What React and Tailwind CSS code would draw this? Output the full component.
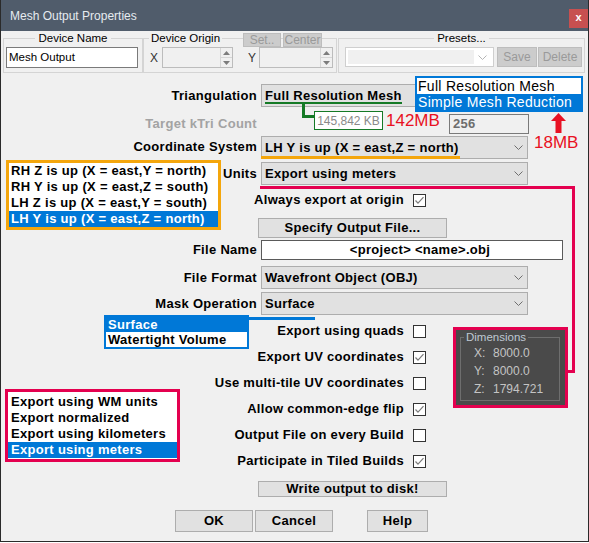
import React from "react";

const Chevron = ({ color = "#6e6e6e" }) => (
  <svg width="9" height="5" viewBox="0 0 9 5">
    <polyline points="0.5,0.5 4.5,4.5 8.5,0.5" fill="none" stroke={color} strokeWidth="1" />
  </svg>
);

function Combo({ text }) {
  return (
    <div className="flex items-center h-[23px] w-[267px] bg-[#e1e1e1] border border-[#adadad] pl-[3px] pr-[4px] text-[13px] font-bold tracking-[0.3px]">
      <span className="flex-1 whitespace-nowrap">{text}</span>
      <Chevron />
    </div>
  );
}

function Check({ checked }) {
  return (
    <div className="w-[13px] h-[13px] border border-[#333333] bg-white flex items-center justify-center">
      {checked && (
        <svg width="11" height="11" viewBox="0 0 11 11">
          <polyline points="1.5,5.5 4,8.2 9.5,2.2" fill="none" stroke="#7a7a7a" strokeWidth="1.2" />
        </svg>
      )}
    </div>
  );
}

function Row({ label, children, className = "", labelClass = "" }) {
  return (
    <div className={`flex items-center ${className}`}>
      <div className={`w-[256px] text-right text-[13px] font-bold tracking-[0.3px] whitespace-nowrap ${labelClass}`}>{label}</div>
      {children}
    </div>
  );
}

function CheckRow({ label, checked, className = "" }) {
  return (
    <div className={`flex items-center h-[14px] ${className}`}>
      <div className="w-[403px] text-right text-[13px] font-bold tracking-[0.3px] whitespace-nowrap">{label}</div>
      <div className="ml-[9px]">
        <Check checked={checked} />
      </div>
    </div>
  );
}

function Spin({ className }) {
  return (
    <div className={`flex h-[21px] border border-[#bcbcbc] bg-[#f0f0f0] justify-end ${className}`}>
      <div className="w-[12px] flex flex-col border-l border-[#d6d6d6]">
        <div className="flex-1 flex items-center justify-center border-b border-[#d6d6d6]">
          <svg width="7" height="4" viewBox="0 0 7 4"><polygon points="3.5,0 7,4 0,4" fill="#7c7c7c" /></svg>
        </div>
        <div className="flex-1 flex items-center justify-center">
          <svg width="7" height="4" viewBox="0 0 7 4"><polygon points="0,0 7,0 3.5,4" fill="#7c7c7c" /></svg>
        </div>
      </div>
    </div>
  );
}

const btn = "bg-[#e1e1e1] border border-[#adadad] flex items-center justify-center text-[13px] font-bold tracking-[0.3px] whitespace-nowrap";
const dbtn = "bg-[#cccccc] border border-[#bdbdbd] flex items-center justify-center text-[12px] text-[#9a9a9a] whitespace-nowrap";
const blue = "bg-[#0078d7] text-white";

export default function App() {
  return (
    <div className="relative w-[589px] h-[543px] bg-white font-['Liberation_Sans',Arial,sans-serif] text-black">
      <div className="w-[589px] h-[542px] border-x border-b border-[#2a2a2a] bg-[#f0f0f0] flex flex-col">
        {/* Title bar */}
        <div className="h-[31px] bg-[#505c6b] flex items-center pl-[9px]">
          <span className="text-[12px] text-[#e6ebf0] flex-1">Mesh Output Properties</span>
          <div className="self-start mt-[9px] w-[19px] h-[19px] bg-[#c75050] flex items-center justify-center text-white text-[11px] font-bold leading-none pb-[2px]">
            x
          </div>
        </div>

        {/* Top groups */}
        <div className="flex h-[42px] pt-[1px] pl-[2px]">
          <fieldset className="w-[140px] h-[41px] border border-[#d4d4d4]">
            <legend className="mx-auto px-[3px] text-[11.5px] leading-[13px]">Device Name</legend>
            <div className="mt-[2px] ml-[2px] w-[132px] h-[21px] border border-[#7a7a7a] bg-white text-[11.5px] pl-[2px] flex items-center">
              Mesh Output
            </div>
          </fieldset>
          <fieldset className="w-[194px] h-[41px] border border-[#d4d4d4]">
            <legend className="ml-[5px] px-[2px] text-[11.5px] leading-[13px]">Device Origin</legend>
            <div className="flex items-center mt-[2px]">
              <span className="ml-[6px] text-[12px] text-[#333]">X</span>
              <Spin className="ml-[4px] w-[71px]" />
              <span className="ml-[15px] text-[12px] text-[#333]">Y</span>
              <Spin className="ml-[3px] w-[74px]" />
            </div>
          </fieldset>
          <fieldset className="ml-[1px] w-[247px] h-[41px] border border-[#d4d4d4]">
            <legend className="mx-auto px-[3px] text-[11.5px] leading-[13px]">Presets...</legend>
            <div className="flex items-center mt-[2px] ml-[6px]">
              <div className="w-[149px] h-[20px] bg-white border border-[#cfcfcf] flex items-center p-[2px]">
                <div className="w-[126px] h-full bg-[#f0f0f0]" />
                <div className="flex-1 flex justify-center">
                  <Chevron color="#b5b5b5" />
                </div>
              </div>
              <div className={`${dbtn} ml-[3px] w-[40px] h-[20px]`}>Save</div>
              <div className={`${dbtn} ml-[1px] w-[44px] h-[20px]`}>Delete</div>
            </div>
          </fieldset>
        </div>

        {/* Main form */}
        <div className="flex flex-col">
          <Row label="Triangulation" className="mt-[11px]">
            <div className="ml-[4px] w-[267px] h-[23px] bg-[#e1e1e1] border border-[#adadad] flex items-center pl-[3px] text-[13px] font-bold tracking-[0.3px]">
              Full Resolution Mesh
            </div>
          </Row>
          <Row label="Target kTri Count" className="mt-[7px]" labelClass="text-[#a3a3a3]">
            <div className="ml-[192px] w-[80px] h-[20px] border border-[#7a7a7a] bg-[#f0f0f0] flex items-center pl-[3px] text-[13px] font-bold tracking-[0.3px] text-[#6d6d6d]">
              256
            </div>
          </Row>
          <Row label="Coordinate System" className="mt-[2px]">
            <div className="ml-[4px]">
              <div className="h-[22px] flex">
                <Combo text="LH Y is up (X = east,Z = north)" />
              </div>
            </div>
          </Row>
          <Row label="Units" className="mt-[4px]">
            <div className="ml-[4px]">
              <Combo text="Export using meters" />
            </div>
          </Row>
          <div className="mt-[8px]">
            <CheckRow label="Always export at origin" checked />
          </div>
          <div className={`${btn} mt-[11px] ml-[257px] w-[189px] h-[20px]`}>Specify Output File...</div>
          <Row label="File Name" className="mt-[2px]">
            <div className="ml-[4px] w-[302px] h-[20px] bg-white border border-[#5a5a5a] flex items-center justify-center pl-[16px] text-[13px] font-bold tracking-[0.3px]">
              {"<project> <name>.obj"}
            </div>
          </Row>
          <Row label="File Format" className="mt-[6px]">
            <div className="ml-[4px]">
              <Combo text="Wavefront Object (OBJ)" />
            </div>
          </Row>
          <Row label="Mask Operation" className="mt-[3px]">
            <div className="ml-[4px]">
              <Combo text="Surface" />
            </div>
          </Row>
          <CheckRow label="Export using quads" className="mt-[9px]" />
          <CheckRow label="Export UV coordinates" checked className="mt-[12px]" />
          <CheckRow label="Use multi-tile UV coordinates" className="mt-[12px]" />
          <CheckRow label="Allow common-edge flip" checked className="mt-[12px]" />
          <CheckRow label="Output File on every Build" className="mt-[12px]" />
          <CheckRow label="Participate in Tiled Builds" checked className="mt-[12px]" />
          <div className={`${btn} mt-[13px] ml-[257px] w-[189px] h-[16px]`}>Write output to disk!</div>
          <div className="flex mt-[13px] ml-[174px]">
            <div className={`${btn} w-[78px] h-[22px]`}>OK</div>
            <div className={`${btn} ml-[2px] w-[78px] h-[22px]`}>Cancel</div>
            <div className={`${btn} ml-[34px] w-[61px] h-[22px]`}>Help</div>
          </div>
        </div>
      </div>

      {/* Disabled buttons over Device Origin group border */}
      <div className={`${dbtn} absolute left-[243px] top-[33px] w-[38px] h-[14px]`}>Set..</div>
      <div className={`${dbtn} absolute left-[283px] top-[33px] w-[39px] h-[14px]`}>Center</div>

      {/* Annotations */}
      <div className="absolute left-[415px] top-[76px] w-[168px] border-2 border-[#0078d7] bg-white text-[14px] leading-[16px]">
        <div className="h-[16px] pl-[1px] tracking-[0.3px] whitespace-nowrap">Full Resolution Mesh</div>
        <div className={`h-[16px] pl-[1px] tracking-[0.3px] whitespace-nowrap ${blue}`}>Simple Mesh Reduction</div>
      </div>

      <div className="absolute left-[265px] top-[102px] w-[137px] h-[2px] bg-[#157a26]" />
      <div className="absolute left-[302px] top-[102px] w-[3px] h-[16px] bg-[#157a26]" />
      <div className="absolute left-[302px] top-[115px] w-[13px] h-[3px] bg-[#157a26]" />
      <div className="absolute left-[314px] top-[111px] w-[69px] h-[19px] border border-[#157a26] bg-white flex items-center justify-center text-[12px] text-[#8a8a8a] whitespace-nowrap">
        145,842 KB
      </div>
      <div className="absolute left-[386px] top-[112px] text-[17px] leading-none text-[#e81123]">142MB</div>

      <svg className="absolute left-[551px] top-[113px]" width="15" height="20" viewBox="0 0 15 20">
        <polygon points="7.5,0 15,8 10.5,8 10.5,20 4.5,20 4.5,8 0,8" fill="#e81123" />
      </svg>
      <div className="absolute left-[534px] top-[134px] text-[17px] leading-none text-[#e81123]">18MB</div>

      <div className="absolute left-[261px] top-[156px] w-[199px] h-[3px] bg-[#f4a60c]" />
      <div className="absolute left-[6px] top-[160px] w-[215px] border-[3px] border-[#f4a60c] bg-white text-[13px] font-bold tracking-[0.3px] leading-[16px]">
        <div className="h-[16px] pl-[2px] whitespace-nowrap">RH Z is up (X = east,Y = north)</div>
        <div className="h-[16px] pl-[2px] whitespace-nowrap">RH Y is up (X = east,Z = south)</div>
        <div className="h-[16px] pl-[2px] whitespace-nowrap">LH Z is up (X = east,Y = south)</div>
        <div className={`h-[16px] pl-[2px] whitespace-nowrap ${blue}`}>LH Y is up (X = east,Z = north)</div>
      </div>

      <div className="absolute left-[260px] top-[186px] w-[315px] h-[3px] bg-[#e4004f]" />
      <div className="absolute left-[572px] top-[186px] w-[3px] h-[187px] bg-[#e4004f]" />
      <div className="absolute left-[566px] top-[370px] w-[9px] h-[3px] bg-[#e4004f]" />

      <div className="absolute left-[248px] top-[317px] w-[67px] h-[3px] bg-[#0078d7]" />
      <div className="absolute left-[104px] top-[315px] w-[145px] border-2 border-[#0078d7] bg-white text-[13px] font-bold tracking-[0.3px] leading-[15px]">
        <div className={`h-[15px] pl-[2px] ${blue}`}>Surface</div>
        <div className="h-[15px] pl-[2px]">Watertight Volume</div>
      </div>

      <div className="absolute left-[453px] top-[327px] w-[115px] h-[81px] border-[3px] border-[#e4004f] bg-[#4a4a4a] pl-[4px] pt-[1px]">
        <fieldset className="w-[100px] h-[70px] border border-[#6e6e6e] text-[12px] text-[#c4c4c4]">
          <legend className="ml-[3px] px-[2px] text-[11.5px] leading-[13px] text-[#bfc8d2]">Dimensions</legend>
          <div className="flex flex-col pl-[13px] leading-[18px]">
            <div className="flex"><span className="w-[19px]">X:</span><span>8000.0</span></div>
            <div className="flex"><span className="w-[19px]">Y:</span><span>8000.0</span></div>
            <div className="flex"><span className="w-[19px]">Z:</span><span>1794.721</span></div>
          </div>
        </fieldset>
      </div>

      <div className="absolute left-[5px] top-[389px] w-[175px] border-[3px] border-[#e4004f] bg-white text-[13px] font-bold tracking-[0.3px] leading-[16px] pt-[2px] pb-[1px]">
        <div className="h-[16px] pl-[3px] whitespace-nowrap">Export using WM units</div>
        <div className="h-[16px] pl-[3px] whitespace-nowrap">Export normalized</div>
        <div className="h-[16px] pl-[3px] whitespace-nowrap">Export using kilometers</div>
        <div className={`h-[16px] pl-[3px] whitespace-nowrap ${blue}`}>Export using meters</div>
      </div>
    </div>
  );
}
